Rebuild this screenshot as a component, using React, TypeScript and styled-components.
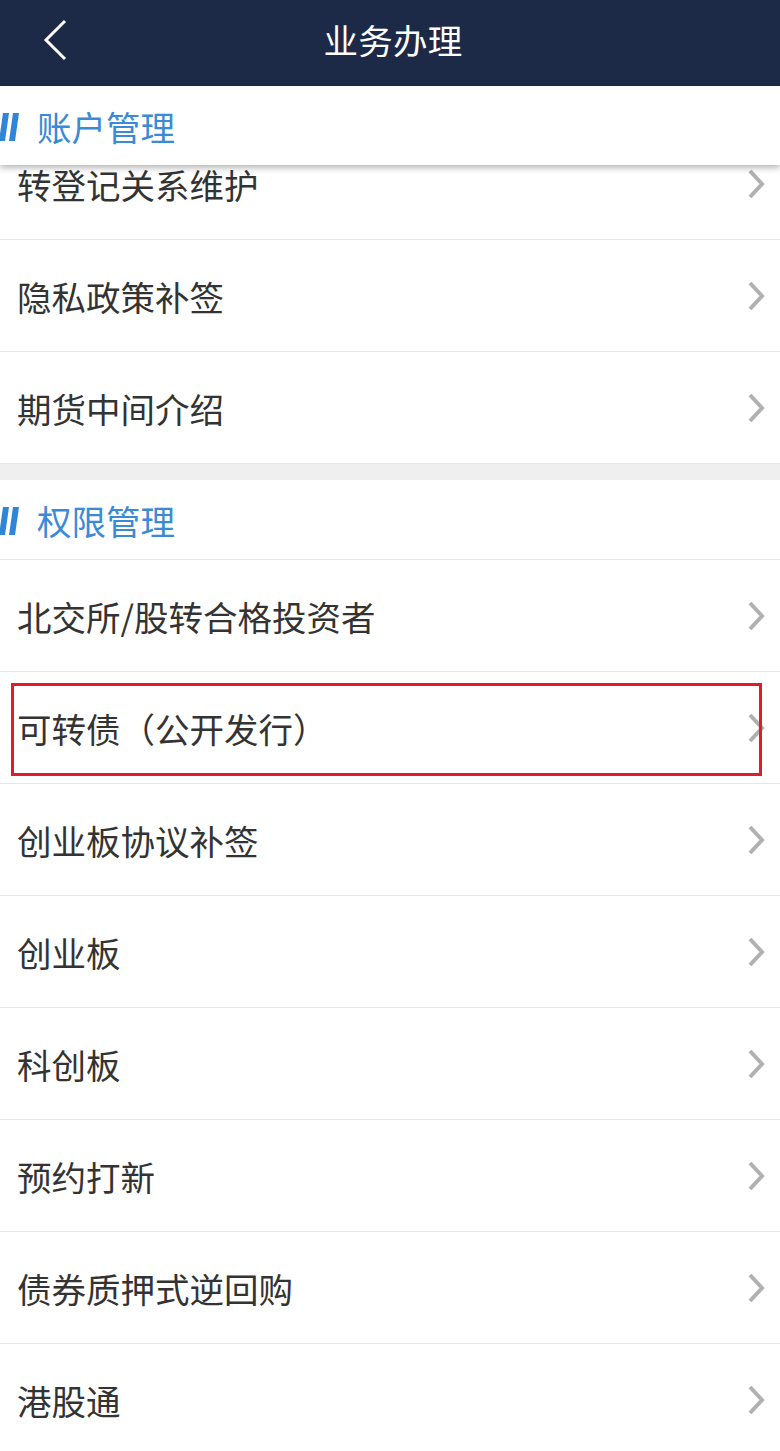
import React from "react";
import styled, { createGlobalStyle } from "styled-components";

const GlobalStyle = createGlobalStyle`
  html, body {
    margin: 0;
    padding: 0;
    background: #ffffff;
    font-family: "Noto Sans CJK SC", "Noto Sans", sans-serif;
  }
  * { box-sizing: border-box; }
`;

const Page = styled.div`
  width: 780px;
  height: 1451px;
  overflow: hidden;
  background: #ffffff;
  display: flex;
  flex-direction: column;
  & > * {
    flex-shrink: 0;
  }
`;

const NavBar = styled.header`
  height: 86px;
  padding-bottom: 7px;
  background: #1c2a48;
  display: grid;
  grid-template-columns: 1fr auto 1fr;
  align-items: center;
  position: relative;
  z-index: 3;
`;

const BackButton = styled.button`
  justify-self: start;
  margin-left: 40px;
  width: 30px;
  height: 44px;
  padding: 0;
  border: none;
  background: transparent;
  display: flex;
  align-items: center;
  justify-content: center;
`;

const NavTitle = styled.h1`
  margin: 0;
  color: #ffffff;
  font-size: 34.5px;
  font-weight: 400;
  line-height: 1;
  letter-spacing: 0.3px;
  transform: translateX(3px);
`;

const Section = styled.section`
  display: flex;
  flex-direction: column;
`;

const SectionHeader = styled.div<{ $sticky?: boolean }>`
  height: ${(p) => (p.$sticky ? "79px" : "80px")};
  flex-shrink: 0;
  display: flex;
  align-items: center;
  background: #ffffff;
  position: relative;
  z-index: 2;
  padding-top: 2px;
  box-shadow: ${(p) =>
    p.$sticky ? "0 3px 6px rgba(0, 0, 0, 0.28)" : "none"};
  border-bottom: ${(p) => (p.$sticky ? "none" : "1px solid #e6e6e6")};
`;

const Stripes = styled.svg`
  width: 20px;
  height: 28px;
  flex: 0 0 20px;
  margin-right: 17px;
`;

const SectionTitle = styled.h2`
  margin: 0;
  font-size: 34.5px;
  font-weight: 400;
  line-height: 1;
  color: #3a8ad6;
`;

const RowList = styled.ul<{ $under?: boolean }>`
  list-style: none;
  margin: ${(p) => (p.$under ? "-37px 0 0" : "0")};
  padding: 0;
`;

const Row = styled.li`
  height: 112px;
  display: flex;
  align-items: center;
  justify-content: space-between;
  padding: 0 15px 0 17px;
  border-bottom: 1px solid #e6e6e6;
  position: relative;
  background: #ffffff;
`;

const RowLabel = styled.span`
  font-size: 34.5px;
  line-height: 1;
  color: #333333;
  padding-top: 1px;
`;

const Chevron = styled.svg`
  width: 18px;
  height: 32px;
  flex: 0 0 18px;
`;

const Highlight = styled.div`
  position: absolute;
  left: 11px;
  top: 11px;
  width: 751px;
  height: 93px;
  border: 3px solid #e01b2a;
  pointer-events: none;
`;

const Gap = styled.div`
  height: 16px;
  background: #efefef;
`;

const StripeIcon = () => (
  <Stripes viewBox="0 0 20 28">
    <polygon points="3,0 9,0 5,28 -1,28" fill="#2f86d8" />
    <polygon points="13,0 19,0 15,28 9,28" fill="#2f86d8" />
  </Stripes>
);

const RightArrow = () => (
  <Chevron viewBox="0 0 18 32">
    <polyline
      points="3,3 15,16 3,29"
      fill="none"
      stroke="#b0b0b0"
      strokeWidth="4"
    />
  </Chevron>
);

type Item = { label: string; highlight?: boolean };

const accountItems: Item[] = [
  { label: "转登记关系维护" },
  { label: "隐私政策补签" },
  { label: "期货中间介绍" },
];

const permissionItems: Item[] = [
  { label: "北交所/股转合格投资者" },
  { label: "可转债（公开发行）", highlight: true },
  { label: "创业板协议补签" },
  { label: "创业板" },
  { label: "科创板" },
  { label: "预约打新" },
  { label: "债券质押式逆回购" },
  { label: "港股通" },
];

const ListRow = ({ item }: { item: Item }) => (
  <Row>
    <RowLabel>{item.label}</RowLabel>
    <RightArrow />
    {item.highlight && <Highlight />}
  </Row>
);

export default function App() {
  return (
    <>
      <GlobalStyle />
      <Page>
        <NavBar>
          <BackButton aria-label="返回">
            <svg width="26" height="42" viewBox="0 0 26 42">
              <polyline
                points="23,2 4,21 23,40"
                fill="none"
                stroke="#ffffff"
                strokeWidth="3"
              />
            </svg>
          </BackButton>
          <NavTitle>业务办理</NavTitle>
          <span />
        </NavBar>

        <Section>
          <SectionHeader $sticky>
            <StripeIcon />
            <SectionTitle>账户管理</SectionTitle>
          </SectionHeader>
          <RowList $under>
            {accountItems.map((it) => (
              <ListRow key={it.label} item={it} />
            ))}
          </RowList>
        </Section>

        <Gap />

        <Section>
          <SectionHeader>
            <StripeIcon />
            <SectionTitle>权限管理</SectionTitle>
          </SectionHeader>
          <RowList>
            {permissionItems.map((it) => (
              <ListRow key={it.label} item={it} />
            ))}
          </RowList>
        </Section>
      </Page>
    </>
  );
}
